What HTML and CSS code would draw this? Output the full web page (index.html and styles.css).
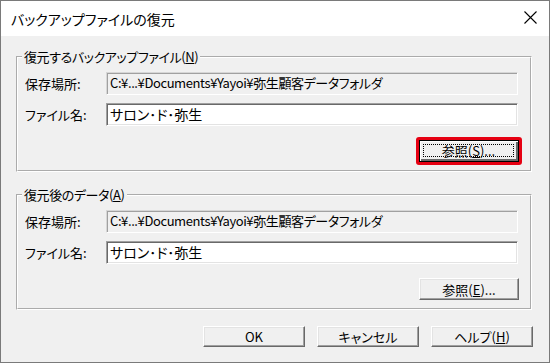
FILE: index.html
```html
<!DOCTYPE html>
<html lang="ja">
<head>
    <meta charset="UTF-8">
    <title>バックアップファイルの復元</title>
    <link rel="stylesheet" href="styles.css">
</head>
<body>
    <div class="window">
        <!-- タイトルバー -->
        <div class="titlebar">
            <span class="title">バックアップファイルの復元</span>
            <svg class="close" width="13" height="13" viewBox="0 0 13 13">
                <path d="M0.5 0.5 L12.5 12.5 M12.5 0.5 L0.5 12.5" stroke="#000" stroke-width="1.1" fill="none"/>
            </svg>
        </div>

        <div class="dialog-body">
            <!-- 復元するバックアップファイル -->
            <fieldset class="group">
                <legend>復元するバックアップファイル(<u>N</u>)</legend>
                <div class="row">
                    <span class="label">保存場所:</span>
                    <div class="field readonly">C:¥...¥Documents¥Yayoi¥弥生顧客データフォルダ</div>
                </div>
                <div class="row">
                    <span class="label">ファイル名:</span>
                    <div class="field edit">サロン･ド･弥生</div>
                </div>
                <div class="actions">
                    <span class="marker">
                        <button class="btn focused"><span class="focus-rect">参照(<u>S</u>)...</span></button>
                    </span>
                </div>
            </fieldset>

            <!-- 復元後のデータ -->
            <fieldset class="group second">
                <legend>復元後のデータ(<u>A</u>)</legend>
                <div class="row">
                    <span class="label">保存場所:</span>
                    <div class="field readonly">C:¥...¥Documents¥Yayoi¥弥生顧客データフォルダ</div>
                </div>
                <div class="row">
                    <span class="label">ファイル名:</span>
                    <div class="field edit">サロン･ド･弥生</div>
                </div>
                <div class="actions">
                    <button class="btn">参照(<u>E</u>)...</button>
                </div>
            </fieldset>

            <div class="footer">
                <button class="btn wide">OK</button>
                <button class="btn wide">キャンセル</button>
                <button class="btn wide">ヘルプ(<u>H</u>)</button>
            </div>
        </div>
    </div>
</body>
</html>
```

FILE: styles.css
```css
body {
    margin: 0;
    padding: 0;
    background-color: #f0f0f0;
    font-family: "Noto Sans CJK JP", "Noto Sans", sans-serif;
    font-size: 13px;
    font-feature-settings: "palt";
    color: #000;
}

.window {
    width: 550px;
    height: 363px;
    box-sizing: border-box;
    border: 1px solid #7a7a7a;
    background-color: #f0f0f0;
    display: flex;
    flex-direction: column;
}

.titlebar {
    height: 35px;
    background-color: #fff;
    display: flex;
    align-items: center;
    justify-content: space-between;
    padding: 0 12px 0 10px;
}

.title {
    font-size: 14px;
}

.close {
    display: block;
    margin-top: -2px;
}

.dialog-body {
    padding: 13px 17px 0 15px;
}

/* グループ枠 */
.group {
    margin: 0;
    padding: 7px 12px 8px 7px;
    border: 2px groove #fff;
}

.group.second {
    margin-top: 15px;
}

.group legend {
    padding: 0 2px;
    margin-left: -3px;
    line-height: 16px;
    letter-spacing: -0.4px;
}

.row {
    display: flex;
    align-items: center;
    height: 23px;
}

.row + .row {
    margin-top: 8px;
}

.label {
    width: 81px;
    flex-shrink: 0;
}

.field {
    flex: 1;
    height: 23px;
    box-sizing: border-box;
    padding: 0 3px;
    line-height: 20px;
    white-space: nowrap;
    overflow: hidden;
    border: 1px solid;
    border-color: #a0a0a0 #fff #fff #a0a0a0;
    box-shadow: inset 1px 1px 0 #696969, inset -1px -1px 0 #e3e3e3;
}

.field.readonly {
    background-color: #f0f0f0;
    letter-spacing: -0.4px;
    border-color: #d6d6d6 #fff #fff #d6d6d6;
    box-shadow: inset 1px 1px 0 #a0a0a0, inset -1px -1px 0 #f0f0f0;
}

.field.edit {
    background-color: #fff;
    font-size: 14px;
}

.actions {
    display: flex;
    justify-content: flex-end;
    margin-top: 14px;
    margin-right: -1px;
}

/* ボタン */
.btn {
    width: 100px;
    height: 22px;
    padding: 0;
    font-family: inherit;
    font-size: 13px;
    font-feature-settings: "palt";
    color: #000;
    background-color: #f0f0f0;
    border: 1px solid;
    border-color: #fff #696969 #696969 #fff;
    box-shadow: inset -1px -1px 0 #a0a0a0, inset 1px 1px 0 #e3e3e3;
    display: flex;
    align-items: center;
    justify-content: center;
}

.btn.focused {
    border-color: #000;
    box-shadow: inset 1px 1px 0 #fff, inset -2px -2px 0 #696969;
    padding: 3px 4px 4px 3px;
}

.focus-rect {
    flex: 1;
    align-self: stretch;
    display: flex;
    align-items: center;
    justify-content: center;
    border: 1px dotted #000;
}

.marker {
    display: block;
    border: 3px solid #e60012;
    border-radius: 3px;
    margin: -3px;
}

.footer {
    display: flex;
    justify-content: flex-end;
    gap: 12px;
    margin-top: 16px;
    margin-right: -1px;
}

.btn.wide {
    width: 102px;
    height: 21px;
}
```
